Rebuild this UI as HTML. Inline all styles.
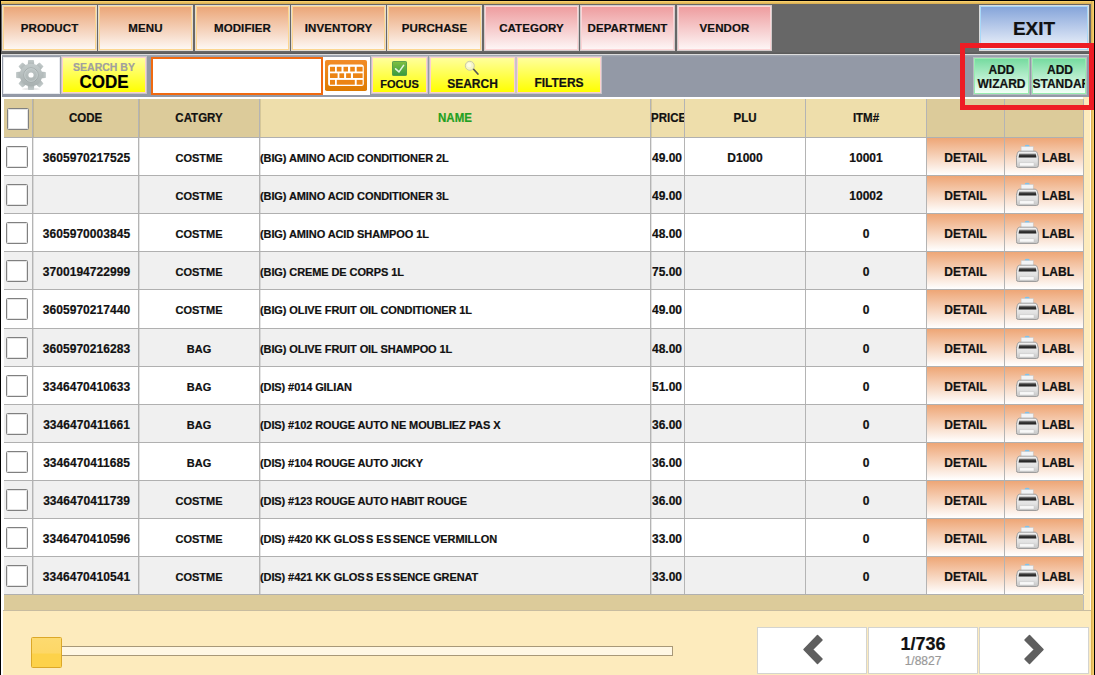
<!DOCTYPE html>
<html><head><meta charset="utf-8"><style>
*{margin:0;padding:0;box-sizing:border-box}
html,body{width:1095px;height:675px;overflow:hidden;background:#fff;font-family:"Liberation Sans",sans-serif;font-weight:bold;color:#111;-webkit-text-stroke:0.2px currentColor}
.a{position:absolute}
.tb{position:absolute;top:5px;height:46px;border:1px solid #e4dcd0;}
.tb>div{position:absolute;left:0;top:0;right:0;bottom:0;border:1px solid #fcd690;background:linear-gradient(#eba678,#fdf7f3);font-size:11.5px;display:flex;align-items:center;justify-content:center;letter-spacing:0.1px}
.tb.pk{border-color:#d4cccc}
.tb.pk>div{border-color:#fcd4d6;background:linear-gradient(#ee9d9f,#fdf5f5)}
.yb{position:absolute;top:56px;height:38px;border:1px solid #c8c4c8}
.yb>div{position:absolute;left:0;top:0;right:0;bottom:0;border:1px solid #fcd0d0;background:linear-gradient(#ffff9c,#ffff00);font-size:12px;text-align:center}
.gb{position:absolute;top:57px;height:38px;border:1px solid #b4bcc0}
.gb>div{position:absolute;left:0;top:0;right:0;bottom:0;border:1px solid #98eeb0;background:linear-gradient(#76dba0,#f2fff6);font-size:12px;text-align:center;line-height:13.5px;padding-top:5px}
.g{margin-left:1.5px}.g1{margin-left:0.5px}
.cell{position:absolute;font-size:12px;white-space:nowrap;overflow:hidden}
.vl{position:absolute;width:1px;background:#b4b4b4}
.hl{position:absolute;height:1px;background:#b0b0b0}
.cb{position:absolute;width:22px;height:22px;background:#fff;border:1px solid #808080;border-radius:1.5px;box-shadow:inset 0 0 0 1px #e4e4e4}
.act{position:absolute;background:linear-gradient(#eea676,#ffffff)}
</style></head><body>

<div class="a" style="left:0;top:0;width:1095px;height:675px;background:#fff"></div>
<div class="a" style="left:1px;top:4px;width:1090px;height:51px;background:#676767"></div>
<div class="a" style="left:1px;top:52px;width:1090px;height:2px;background:linear-gradient(#646464,#585858)"></div>
<div class="a" style="left:1px;top:54px;width:1090px;height:1px;background:#dcdcdc"></div>
<div class="a" style="left:1px;top:1px;width:1093px;height:3px;background:linear-gradient(#ffd772,#d4aa50)"></div>
<div class="a" style="left:1091px;top:1px;width:3px;height:675px;background:linear-gradient(90deg,#d4aa50,#ffd772)"></div>
<div class="a" style="left:0;top:0;width:1095px;height:1px;background:#000"></div>
<div class="a" style="left:0;top:0;width:1px;height:675px;background:#000"></div>
<div class="a" style="left:1094px;top:0;width:1px;height:675px;background:#000"></div>
<div class="tb" style="left:2px;width:95px"><div>PRODUCT</div></div>
<div class="tb" style="left:98px;width:95px"><div>MENU</div></div>
<div class="tb" style="left:195px;width:95px"><div>MODIFIER</div></div>
<div class="tb" style="left:291px;width:95px"><div>INVENTORY</div></div>
<div class="tb" style="left:387px;width:95px"><div>PURCHASE</div></div>
<div class="tb pk" style="left:484px;width:95px"><div>CATEGORY</div></div>
<div class="tb pk" style="left:580px;width:95px"><div>DEPARTMENT</div></div>
<div class="tb pk" style="left:677px;width:95px"><div>VENDOR</div></div>
<div class="a" style="left:979px;top:5px;width:110px;height:46px;border:1px solid #dcdcdc"><div style="position:absolute;left:0;top:0;right:0;bottom:0;border:1px solid #a8d8f8;background:linear-gradient(#86a5da,#eef3fb);font-size:19px;display:flex;align-items:center;justify-content:center;padding-top:1px">EXIT</div></div>
<div class="a" style="left:2px;top:55px;width:1089px;height:42px;background:linear-gradient(#a4aab4 0px,#9399a6 2px)"></div>
<div class="a" style="left:1px;top:97px;width:1082px;height:2px;background:#fff"></div>
<div class="a" style="left:3px;top:57px;width:57px;height:37px;background:#fff;border:1px solid #e8eaee"></div>
<svg class="a" style="left:16px;top:59.6px" width="30" height="30" viewBox="-15 -15 30 30"><defs><linearGradient id="gg" x1="0" y1="0" x2="0" y2="1"><stop offset="0" stop-color="#c2caca"/><stop offset="1" stop-color="#a8b0b0"/></linearGradient></defs><ellipse cx="0" cy="14" rx="9" ry="1.2" fill="#e8e8e8"/><g fill="url(#gg)"><path d="M-3.4 -9 L-2.9 -14.4 Q-2.8 -14.9 -2.3 -14.9 L2.3 -14.9 Q2.8 -14.9 2.9 -14.4 L3.4 -9 Z" transform="rotate(0)"/><path d="M-3.4 -9 L-2.9 -14.4 Q-2.8 -14.9 -2.3 -14.9 L2.3 -14.9 Q2.8 -14.9 2.9 -14.4 L3.4 -9 Z" transform="rotate(45)"/><path d="M-3.4 -9 L-2.9 -14.4 Q-2.8 -14.9 -2.3 -14.9 L2.3 -14.9 Q2.8 -14.9 2.9 -14.4 L3.4 -9 Z" transform="rotate(90)"/><path d="M-3.4 -9 L-2.9 -14.4 Q-2.8 -14.9 -2.3 -14.9 L2.3 -14.9 Q2.8 -14.9 2.9 -14.4 L3.4 -9 Z" transform="rotate(135)"/><path d="M-3.4 -9 L-2.9 -14.4 Q-2.8 -14.9 -2.3 -14.9 L2.3 -14.9 Q2.8 -14.9 2.9 -14.4 L3.4 -9 Z" transform="rotate(180)"/><path d="M-3.4 -9 L-2.9 -14.4 Q-2.8 -14.9 -2.3 -14.9 L2.3 -14.9 Q2.8 -14.9 2.9 -14.4 L3.4 -9 Z" transform="rotate(225)"/><path d="M-3.4 -9 L-2.9 -14.4 Q-2.8 -14.9 -2.3 -14.9 L2.3 -14.9 Q2.8 -14.9 2.9 -14.4 L3.4 -9 Z" transform="rotate(270)"/><path d="M-3.4 -9 L-2.9 -14.4 Q-2.8 -14.9 -2.3 -14.9 L2.3 -14.9 Q2.8 -14.9 2.9 -14.4 L3.4 -9 Z" transform="rotate(315)"/><circle r="11.3"/></g><circle r="7.2" fill="none" stroke="#9ea6a6" stroke-width="0.8"/><circle r="6.4" fill="none" stroke="#ccd4d4" stroke-width="0.7"/><circle r="2.6" fill="#fff"/></svg>
<div class="yb" style="left:61px;width:86px;height:38px"><div style="padding-top:4px"><div style="font-size:10.5px;color:#a0a0a0;line-height:11px">SEARCH BY</div><div style="font-size:17px;color:#000;line-height:16px;margin-top:2px;transform:scaleY(1.08)">CODE</div></div></div>
<div class="a" style="left:151px;top:57px;width:172px;height:38px;background:#fff;border:2px solid #f06a10"></div>
<div class="a" style="left:323px;top:57px;width:47px;height:38px;background:#fff"></div>
<svg class="a" style="left:325px;top:60px" width="42" height="31" viewBox="0 0 42 31"><defs><linearGradient id="kg" x1="0" y1="0" x2="0" y2="1"><stop offset="0" stop-color="#f28c28"/><stop offset="1" stop-color="#de7a00"/></linearGradient></defs>
<rect x="0" y="0" width="42" height="31" rx="1.8" fill="url(#kg)"/>
<rect x="3.1" y="4.6" width="35.7" height="21.5" rx="2.5" fill="#fff"/>
<g fill="#ec8414">
<rect x="5" y="6.8" width="5" height="4.7"/><rect x="11.8" y="6.8" width="4.7" height="4.7"/><rect x="18.5" y="6.8" width="4.5" height="4.7"/><rect x="25.2" y="6.8" width="4.6" height="4.7"/><rect x="31.7" y="6.8" width="5.9" height="4.7"/>
<rect x="5" y="13.3" width="7.6" height="4.7"/><rect x="14.4" y="13.3" width="4.7" height="4.7"/><rect x="21.1" y="13.3" width="4.8" height="4.7"/><rect x="28" y="13.3" width="9.6" height="4.7"/>
<rect x="5" y="19.9" width="5" height="4.8"/><rect x="11.8" y="19.9" width="18" height="4.8"/><rect x="31.7" y="19.9" width="5.9" height="4.8"/>
</g></svg>
<div class="yb" style="left:371px;width:57px"><div><div style="height:21px"></div><div style="line-height:11px;font-size:11px">FOCUS</div></div></div>
<svg class="a" style="left:392px;top:61px" width="15" height="15" viewBox="0 0 15 15"><defs><linearGradient id="cg" x1="0" y1="0" x2="0" y2="1"><stop offset="0" stop-color="#80c040"/><stop offset="1" stop-color="#389a40"/></linearGradient></defs><rect x="0.4" y="0.4" width="14.2" height="14.2" rx="1.2" fill="url(#cg)" stroke="#3a8a4a" stroke-width="0.8"/><path d="M3.6 7.9 L7 10.9 L11.6 4.4" fill="none" stroke="#e4f4e0" stroke-width="1.6" stroke-linecap="round" stroke-linejoin="round"/></svg>
<div class="yb" style="left:429px;width:87px"><div><div style="height:21px"></div><div style="line-height:11px">SEARCH</div></div></div>
<svg class="a" style="left:464px;top:60px" width="16" height="16" viewBox="0 0 16 16"><path d="M9.4 9 L13.9 14" stroke="#555" stroke-width="1.7" stroke-linecap="round"/><circle cx="5.8" cy="5.8" r="4.5" fill="#f6f6c8" stroke="#c4c4a8" stroke-width="0.9"/><circle cx="5.2" cy="5" r="2.2" fill="#fcfce4"/></svg>
<div class="yb" style="left:516px;width:86px"><div style="padding-top:20px;line-height:11px">FILTERS</div></div>
<div class="gb" style="left:973px;width:57px"><div>ADD<br>WIZARD</div></div>
<div class="gb" style="left:1031px;width:56px"><div style="text-align:left;padding-left:0;white-space:nowrap;overflow:hidden"><span style="padding-left:14px">ADD</span><br><span style="margin-left:-0.5px">STANDARD</span></div></div>
<div class="a" style="left:4px;top:99px;width:1079px;height:38px;background:#dccb9a"></div>
<div class="a" style="left:259px;top:99px;width:668px;height:38px;background:#eedeab"></div>
<div class="a" style="left:1083px;top:97px;width:8px;height:578px;background:#fdebbd"></div>
<div class="a" style="left:1090px;top:97px;width:1px;height:578px;background:#fffaf0"></div>
<div class="cell" style="left:33px;top:99px;width:105px;height:38px;line-height:38px;text-align:center;font-size:11.5px;color:#111;transform:scaleY(1.12)">CODE</div>
<div class="cell" style="left:139px;top:99px;width:120px;height:38px;line-height:38px;text-align:center;font-size:11.5px;color:#111;transform:scaleY(1.12)">CATGRY</div>
<div class="cell" style="left:260px;top:99px;width:390px;height:38px;line-height:38px;text-align:center;font-size:11.5px;color:#22a022;transform:scaleY(1.12)">NAME</div>
<div class="cell" style="left:651px;top:99px;width:33px;height:38px;line-height:38px;text-align:center;font-size:11.5px;color:#111;transform:scaleY(1.12)">PRICE</div>
<div class="cell" style="left:685px;top:99px;width:120px;height:38px;line-height:38px;text-align:center;font-size:11.5px;color:#111;transform:scaleY(1.12)">PLU</div>
<div class="cell" style="left:806px;top:99px;width:120px;height:38px;line-height:38px;text-align:center;font-size:11.5px;color:#111;transform:scaleY(1.12)">ITM#</div>
<div class="cb" style="left:7px;top:108px"></div>
<div class="a" style="left:4px;top:137px;width:922px;height:38px;background:#fff"></div>
<div class="act" style="left:927px;top:138px;width:77px;height:37px"></div>
<div class="act" style="left:1005px;top:138px;width:78px;height:37px"></div>
<div class="cb" style="left:6px;top:146px"></div>
<div class="cell" style="left:33px;top:138.5px;width:105px;line-height:38px;text-align:center;letter-spacing:0.05px;padding-left:2px">3605970217525</div>
<div class="cell" style="left:139px;top:138.5px;width:120px;line-height:38px;text-align:center;font-size:11px">COSTME</div>
<div class="cell" style="left:260px;top:138.5px;width:390px;line-height:38px;font-size:11px;letter-spacing:-0.1px">(BIG) AMINO ACID CONDITIONER 2L</div>
<div class="cell" style="left:652px;top:138.5px;width:33px;line-height:38px">49.00</div>
<div class="cell" style="left:685px;top:138.5px;width:120px;line-height:38px;text-align:center">D1000</div>
<div class="cell" style="left:806px;top:138.5px;width:120px;line-height:38px;text-align:center">10001</div>
<div class="cell" style="left:927px;top:138.5px;width:77px;line-height:38px;text-align:center">DETAIL</div>
<div class="a" style="left:1016px;top:144px"><svg width="24" height="24" viewBox="0 0 24 24">
<defs><linearGradient id="bg_" x1="0" y1="0" x2="0" y2="1"><stop offset="0" stop-color="#f2f2f2"/><stop offset="0.6" stop-color="#e2e2e2"/><stop offset="1" stop-color="#c4c4c4"/></linearGradient>
<linearGradient id="sg_" x1="0" y1="0" x2="0" y2="1"><stop offset="0" stop-color="#a0a0a0"/><stop offset="0.45" stop-color="#3a3a3a"/><stop offset="1" stop-color="#1c1c1c"/></linearGradient></defs>
<ellipse cx="11.2" cy="2.2" rx="2.5" ry="1.4" fill="#7ec2ec"/>
<rect x="5.1" y="2.6" width="12.1" height="7" fill="#f2f4f6" stroke="#c4c8cc" stroke-width="0.5"/>
<path d="M3.4 7.2 L19.2 7.2 Q20.8 7.4 21.3 9.2 L22.4 13.2 L22.4 21.5 Q22.4 23.5 20.4 23.5 L2.4 23.5 Q0.4 23.5 0.4 21.5 L0.4 13.2 L1.4 9.2 Q1.9 7.4 3.4 7.2 Z" fill="url(#bg_)" stroke="#969696" stroke-width="0.9"/>
<path d="M3.2 9.6 L19.8 9.6 L20.4 13.4 L2.6 13.4 Z" fill="url(#sg_)"/>
<rect x="3.7" y="18.8" width="14.3" height="3.2" fill="#f8f8f8" stroke="#c8c8c8" stroke-width="0.5"/>
</svg></div>
<div class="cell" style="left:1042px;top:138.5px;width:41px;line-height:38px">LABL</div>
<div class="a" style="left:4px;top:175px;width:922px;height:38px;background:#f0f0f0"></div>
<div class="act" style="left:927px;top:176px;width:77px;height:37px"></div>
<div class="act" style="left:1005px;top:176px;width:78px;height:37px"></div>
<div class="cb" style="left:6px;top:184px"></div>
<div class="cell" style="left:33px;top:176.5px;width:105px;line-height:38px;text-align:center;letter-spacing:0.05px;padding-left:2px"></div>
<div class="cell" style="left:139px;top:176.5px;width:120px;line-height:38px;text-align:center;font-size:11px">COSTME</div>
<div class="cell" style="left:260px;top:176.5px;width:390px;line-height:38px;font-size:11px;letter-spacing:-0.1px">(BIG) AMINO ACID CONDITIONER 3L</div>
<div class="cell" style="left:652px;top:176.5px;width:33px;line-height:38px">49.00</div>
<div class="cell" style="left:685px;top:176.5px;width:120px;line-height:38px;text-align:center"></div>
<div class="cell" style="left:806px;top:176.5px;width:120px;line-height:38px;text-align:center">10002</div>
<div class="cell" style="left:927px;top:176.5px;width:77px;line-height:38px;text-align:center">DETAIL</div>
<div class="a" style="left:1016px;top:182px"><svg width="24" height="24" viewBox="0 0 24 24">
<defs><linearGradient id="bg_" x1="0" y1="0" x2="0" y2="1"><stop offset="0" stop-color="#f2f2f2"/><stop offset="0.6" stop-color="#e2e2e2"/><stop offset="1" stop-color="#c4c4c4"/></linearGradient>
<linearGradient id="sg_" x1="0" y1="0" x2="0" y2="1"><stop offset="0" stop-color="#a0a0a0"/><stop offset="0.45" stop-color="#3a3a3a"/><stop offset="1" stop-color="#1c1c1c"/></linearGradient></defs>
<ellipse cx="11.2" cy="2.2" rx="2.5" ry="1.4" fill="#7ec2ec"/>
<rect x="5.1" y="2.6" width="12.1" height="7" fill="#f2f4f6" stroke="#c4c8cc" stroke-width="0.5"/>
<path d="M3.4 7.2 L19.2 7.2 Q20.8 7.4 21.3 9.2 L22.4 13.2 L22.4 21.5 Q22.4 23.5 20.4 23.5 L2.4 23.5 Q0.4 23.5 0.4 21.5 L0.4 13.2 L1.4 9.2 Q1.9 7.4 3.4 7.2 Z" fill="url(#bg_)" stroke="#969696" stroke-width="0.9"/>
<path d="M3.2 9.6 L19.8 9.6 L20.4 13.4 L2.6 13.4 Z" fill="url(#sg_)"/>
<rect x="3.7" y="18.8" width="14.3" height="3.2" fill="#f8f8f8" stroke="#c8c8c8" stroke-width="0.5"/>
</svg></div>
<div class="cell" style="left:1042px;top:176.5px;width:41px;line-height:38px">LABL</div>
<div class="a" style="left:4px;top:213px;width:922px;height:38px;background:#fff"></div>
<div class="act" style="left:927px;top:214px;width:77px;height:37px"></div>
<div class="act" style="left:1005px;top:214px;width:78px;height:37px"></div>
<div class="cb" style="left:6px;top:222px"></div>
<div class="cell" style="left:33px;top:214.5px;width:105px;line-height:38px;text-align:center;letter-spacing:0.05px;padding-left:2px">3605970003845</div>
<div class="cell" style="left:139px;top:214.5px;width:120px;line-height:38px;text-align:center;font-size:11px">COSTME</div>
<div class="cell" style="left:260px;top:214.5px;width:390px;line-height:38px;font-size:11px;letter-spacing:-0.1px">(BIG) AMINO ACID SHAMPOO 1L</div>
<div class="cell" style="left:652px;top:214.5px;width:33px;line-height:38px">48.00</div>
<div class="cell" style="left:685px;top:214.5px;width:120px;line-height:38px;text-align:center"></div>
<div class="cell" style="left:806px;top:214.5px;width:120px;line-height:38px;text-align:center">0</div>
<div class="cell" style="left:927px;top:214.5px;width:77px;line-height:38px;text-align:center">DETAIL</div>
<div class="a" style="left:1016px;top:220px"><svg width="24" height="24" viewBox="0 0 24 24">
<defs><linearGradient id="bg_" x1="0" y1="0" x2="0" y2="1"><stop offset="0" stop-color="#f2f2f2"/><stop offset="0.6" stop-color="#e2e2e2"/><stop offset="1" stop-color="#c4c4c4"/></linearGradient>
<linearGradient id="sg_" x1="0" y1="0" x2="0" y2="1"><stop offset="0" stop-color="#a0a0a0"/><stop offset="0.45" stop-color="#3a3a3a"/><stop offset="1" stop-color="#1c1c1c"/></linearGradient></defs>
<ellipse cx="11.2" cy="2.2" rx="2.5" ry="1.4" fill="#7ec2ec"/>
<rect x="5.1" y="2.6" width="12.1" height="7" fill="#f2f4f6" stroke="#c4c8cc" stroke-width="0.5"/>
<path d="M3.4 7.2 L19.2 7.2 Q20.8 7.4 21.3 9.2 L22.4 13.2 L22.4 21.5 Q22.4 23.5 20.4 23.5 L2.4 23.5 Q0.4 23.5 0.4 21.5 L0.4 13.2 L1.4 9.2 Q1.9 7.4 3.4 7.2 Z" fill="url(#bg_)" stroke="#969696" stroke-width="0.9"/>
<path d="M3.2 9.6 L19.8 9.6 L20.4 13.4 L2.6 13.4 Z" fill="url(#sg_)"/>
<rect x="3.7" y="18.8" width="14.3" height="3.2" fill="#f8f8f8" stroke="#c8c8c8" stroke-width="0.5"/>
</svg></div>
<div class="cell" style="left:1042px;top:214.5px;width:41px;line-height:38px">LABL</div>
<div class="a" style="left:4px;top:251px;width:922px;height:38px;background:#f0f0f0"></div>
<div class="act" style="left:927px;top:252px;width:77px;height:37px"></div>
<div class="act" style="left:1005px;top:252px;width:78px;height:37px"></div>
<div class="cb" style="left:6px;top:260px"></div>
<div class="cell" style="left:33px;top:252.5px;width:105px;line-height:38px;text-align:center;letter-spacing:0.05px;padding-left:2px">3700194722999</div>
<div class="cell" style="left:139px;top:252.5px;width:120px;line-height:38px;text-align:center;font-size:11px">COSTME</div>
<div class="cell" style="left:260px;top:252.5px;width:390px;line-height:38px;font-size:11px;letter-spacing:-0.1px">(BIG) CREME DE CORPS 1L</div>
<div class="cell" style="left:652px;top:252.5px;width:33px;line-height:38px">75.00</div>
<div class="cell" style="left:685px;top:252.5px;width:120px;line-height:38px;text-align:center"></div>
<div class="cell" style="left:806px;top:252.5px;width:120px;line-height:38px;text-align:center">0</div>
<div class="cell" style="left:927px;top:252.5px;width:77px;line-height:38px;text-align:center">DETAIL</div>
<div class="a" style="left:1016px;top:258px"><svg width="24" height="24" viewBox="0 0 24 24">
<defs><linearGradient id="bg_" x1="0" y1="0" x2="0" y2="1"><stop offset="0" stop-color="#f2f2f2"/><stop offset="0.6" stop-color="#e2e2e2"/><stop offset="1" stop-color="#c4c4c4"/></linearGradient>
<linearGradient id="sg_" x1="0" y1="0" x2="0" y2="1"><stop offset="0" stop-color="#a0a0a0"/><stop offset="0.45" stop-color="#3a3a3a"/><stop offset="1" stop-color="#1c1c1c"/></linearGradient></defs>
<ellipse cx="11.2" cy="2.2" rx="2.5" ry="1.4" fill="#7ec2ec"/>
<rect x="5.1" y="2.6" width="12.1" height="7" fill="#f2f4f6" stroke="#c4c8cc" stroke-width="0.5"/>
<path d="M3.4 7.2 L19.2 7.2 Q20.8 7.4 21.3 9.2 L22.4 13.2 L22.4 21.5 Q22.4 23.5 20.4 23.5 L2.4 23.5 Q0.4 23.5 0.4 21.5 L0.4 13.2 L1.4 9.2 Q1.9 7.4 3.4 7.2 Z" fill="url(#bg_)" stroke="#969696" stroke-width="0.9"/>
<path d="M3.2 9.6 L19.8 9.6 L20.4 13.4 L2.6 13.4 Z" fill="url(#sg_)"/>
<rect x="3.7" y="18.8" width="14.3" height="3.2" fill="#f8f8f8" stroke="#c8c8c8" stroke-width="0.5"/>
</svg></div>
<div class="cell" style="left:1042px;top:252.5px;width:41px;line-height:38px">LABL</div>
<div class="a" style="left:4px;top:289px;width:922px;height:39px;background:#fff"></div>
<div class="act" style="left:927px;top:290px;width:77px;height:38px"></div>
<div class="act" style="left:1005px;top:290px;width:78px;height:38px"></div>
<div class="cb" style="left:6px;top:298px"></div>
<div class="cell" style="left:33px;top:290.5px;width:105px;line-height:38px;text-align:center;letter-spacing:0.05px;padding-left:2px">3605970217440</div>
<div class="cell" style="left:139px;top:290.5px;width:120px;line-height:38px;text-align:center;font-size:11px">COSTME</div>
<div class="cell" style="left:260px;top:290.5px;width:390px;line-height:38px;font-size:11px;letter-spacing:-0.1px">(BIG) OLIVE FRUIT OIL CONDITIONER 1L</div>
<div class="cell" style="left:652px;top:290.5px;width:33px;line-height:38px">49.00</div>
<div class="cell" style="left:685px;top:290.5px;width:120px;line-height:38px;text-align:center"></div>
<div class="cell" style="left:806px;top:290.5px;width:120px;line-height:38px;text-align:center">0</div>
<div class="cell" style="left:927px;top:290.5px;width:77px;line-height:38px;text-align:center">DETAIL</div>
<div class="a" style="left:1016px;top:296px"><svg width="24" height="24" viewBox="0 0 24 24">
<defs><linearGradient id="bg_" x1="0" y1="0" x2="0" y2="1"><stop offset="0" stop-color="#f2f2f2"/><stop offset="0.6" stop-color="#e2e2e2"/><stop offset="1" stop-color="#c4c4c4"/></linearGradient>
<linearGradient id="sg_" x1="0" y1="0" x2="0" y2="1"><stop offset="0" stop-color="#a0a0a0"/><stop offset="0.45" stop-color="#3a3a3a"/><stop offset="1" stop-color="#1c1c1c"/></linearGradient></defs>
<ellipse cx="11.2" cy="2.2" rx="2.5" ry="1.4" fill="#7ec2ec"/>
<rect x="5.1" y="2.6" width="12.1" height="7" fill="#f2f4f6" stroke="#c4c8cc" stroke-width="0.5"/>
<path d="M3.4 7.2 L19.2 7.2 Q20.8 7.4 21.3 9.2 L22.4 13.2 L22.4 21.5 Q22.4 23.5 20.4 23.5 L2.4 23.5 Q0.4 23.5 0.4 21.5 L0.4 13.2 L1.4 9.2 Q1.9 7.4 3.4 7.2 Z" fill="url(#bg_)" stroke="#969696" stroke-width="0.9"/>
<path d="M3.2 9.6 L19.8 9.6 L20.4 13.4 L2.6 13.4 Z" fill="url(#sg_)"/>
<rect x="3.7" y="18.8" width="14.3" height="3.2" fill="#f8f8f8" stroke="#c8c8c8" stroke-width="0.5"/>
</svg></div>
<div class="cell" style="left:1042px;top:290.5px;width:41px;line-height:38px">LABL</div>
<div class="a" style="left:4px;top:328px;width:922px;height:38px;background:#f0f0f0"></div>
<div class="act" style="left:927px;top:329px;width:77px;height:37px"></div>
<div class="act" style="left:1005px;top:329px;width:78px;height:37px"></div>
<div class="cb" style="left:6px;top:337px"></div>
<div class="cell" style="left:33px;top:329.5px;width:105px;line-height:38px;text-align:center;letter-spacing:0.05px;padding-left:2px">3605970216283</div>
<div class="cell" style="left:139px;top:329.5px;width:120px;line-height:38px;text-align:center;font-size:11px">BAG</div>
<div class="cell" style="left:260px;top:329.5px;width:390px;line-height:38px;font-size:11px;letter-spacing:-0.1px">(BIG) OLIVE FRUIT OIL SHAMPOO 1L</div>
<div class="cell" style="left:652px;top:329.5px;width:33px;line-height:38px">48.00</div>
<div class="cell" style="left:685px;top:329.5px;width:120px;line-height:38px;text-align:center"></div>
<div class="cell" style="left:806px;top:329.5px;width:120px;line-height:38px;text-align:center">0</div>
<div class="cell" style="left:927px;top:329.5px;width:77px;line-height:38px;text-align:center">DETAIL</div>
<div class="a" style="left:1016px;top:335px"><svg width="24" height="24" viewBox="0 0 24 24">
<defs><linearGradient id="bg_" x1="0" y1="0" x2="0" y2="1"><stop offset="0" stop-color="#f2f2f2"/><stop offset="0.6" stop-color="#e2e2e2"/><stop offset="1" stop-color="#c4c4c4"/></linearGradient>
<linearGradient id="sg_" x1="0" y1="0" x2="0" y2="1"><stop offset="0" stop-color="#a0a0a0"/><stop offset="0.45" stop-color="#3a3a3a"/><stop offset="1" stop-color="#1c1c1c"/></linearGradient></defs>
<ellipse cx="11.2" cy="2.2" rx="2.5" ry="1.4" fill="#7ec2ec"/>
<rect x="5.1" y="2.6" width="12.1" height="7" fill="#f2f4f6" stroke="#c4c8cc" stroke-width="0.5"/>
<path d="M3.4 7.2 L19.2 7.2 Q20.8 7.4 21.3 9.2 L22.4 13.2 L22.4 21.5 Q22.4 23.5 20.4 23.5 L2.4 23.5 Q0.4 23.5 0.4 21.5 L0.4 13.2 L1.4 9.2 Q1.9 7.4 3.4 7.2 Z" fill="url(#bg_)" stroke="#969696" stroke-width="0.9"/>
<path d="M3.2 9.6 L19.8 9.6 L20.4 13.4 L2.6 13.4 Z" fill="url(#sg_)"/>
<rect x="3.7" y="18.8" width="14.3" height="3.2" fill="#f8f8f8" stroke="#c8c8c8" stroke-width="0.5"/>
</svg></div>
<div class="cell" style="left:1042px;top:329.5px;width:41px;line-height:38px">LABL</div>
<div class="a" style="left:4px;top:366px;width:922px;height:38px;background:#fff"></div>
<div class="act" style="left:927px;top:367px;width:77px;height:37px"></div>
<div class="act" style="left:1005px;top:367px;width:78px;height:37px"></div>
<div class="cb" style="left:6px;top:375px"></div>
<div class="cell" style="left:33px;top:367.5px;width:105px;line-height:38px;text-align:center;letter-spacing:0.05px;padding-left:2px">3346470410633</div>
<div class="cell" style="left:139px;top:367.5px;width:120px;line-height:38px;text-align:center;font-size:11px">BAG</div>
<div class="cell" style="left:260px;top:367.5px;width:390px;line-height:38px;font-size:11px;letter-spacing:-0.1px">(DIS) #014 GILIAN</div>
<div class="cell" style="left:652px;top:367.5px;width:33px;line-height:38px">51.00</div>
<div class="cell" style="left:685px;top:367.5px;width:120px;line-height:38px;text-align:center"></div>
<div class="cell" style="left:806px;top:367.5px;width:120px;line-height:38px;text-align:center">0</div>
<div class="cell" style="left:927px;top:367.5px;width:77px;line-height:38px;text-align:center">DETAIL</div>
<div class="a" style="left:1016px;top:373px"><svg width="24" height="24" viewBox="0 0 24 24">
<defs><linearGradient id="bg_" x1="0" y1="0" x2="0" y2="1"><stop offset="0" stop-color="#f2f2f2"/><stop offset="0.6" stop-color="#e2e2e2"/><stop offset="1" stop-color="#c4c4c4"/></linearGradient>
<linearGradient id="sg_" x1="0" y1="0" x2="0" y2="1"><stop offset="0" stop-color="#a0a0a0"/><stop offset="0.45" stop-color="#3a3a3a"/><stop offset="1" stop-color="#1c1c1c"/></linearGradient></defs>
<ellipse cx="11.2" cy="2.2" rx="2.5" ry="1.4" fill="#7ec2ec"/>
<rect x="5.1" y="2.6" width="12.1" height="7" fill="#f2f4f6" stroke="#c4c8cc" stroke-width="0.5"/>
<path d="M3.4 7.2 L19.2 7.2 Q20.8 7.4 21.3 9.2 L22.4 13.2 L22.4 21.5 Q22.4 23.5 20.4 23.5 L2.4 23.5 Q0.4 23.5 0.4 21.5 L0.4 13.2 L1.4 9.2 Q1.9 7.4 3.4 7.2 Z" fill="url(#bg_)" stroke="#969696" stroke-width="0.9"/>
<path d="M3.2 9.6 L19.8 9.6 L20.4 13.4 L2.6 13.4 Z" fill="url(#sg_)"/>
<rect x="3.7" y="18.8" width="14.3" height="3.2" fill="#f8f8f8" stroke="#c8c8c8" stroke-width="0.5"/>
</svg></div>
<div class="cell" style="left:1042px;top:367.5px;width:41px;line-height:38px">LABL</div>
<div class="a" style="left:4px;top:404px;width:922px;height:38px;background:#f0f0f0"></div>
<div class="act" style="left:927px;top:405px;width:77px;height:37px"></div>
<div class="act" style="left:1005px;top:405px;width:78px;height:37px"></div>
<div class="cb" style="left:6px;top:413px"></div>
<div class="cell" style="left:33px;top:405.5px;width:105px;line-height:38px;text-align:center;letter-spacing:0.05px;padding-left:2px">3346470411661</div>
<div class="cell" style="left:139px;top:405.5px;width:120px;line-height:38px;text-align:center;font-size:11px">BAG</div>
<div class="cell" style="left:260px;top:405.5px;width:390px;line-height:38px;font-size:11px;letter-spacing:-0.1px">(DIS) #102 ROUGE AUTO NE MOUBLIEZ PAS X</div>
<div class="cell" style="left:652px;top:405.5px;width:33px;line-height:38px">36.00</div>
<div class="cell" style="left:685px;top:405.5px;width:120px;line-height:38px;text-align:center"></div>
<div class="cell" style="left:806px;top:405.5px;width:120px;line-height:38px;text-align:center">0</div>
<div class="cell" style="left:927px;top:405.5px;width:77px;line-height:38px;text-align:center">DETAIL</div>
<div class="a" style="left:1016px;top:411px"><svg width="24" height="24" viewBox="0 0 24 24">
<defs><linearGradient id="bg_" x1="0" y1="0" x2="0" y2="1"><stop offset="0" stop-color="#f2f2f2"/><stop offset="0.6" stop-color="#e2e2e2"/><stop offset="1" stop-color="#c4c4c4"/></linearGradient>
<linearGradient id="sg_" x1="0" y1="0" x2="0" y2="1"><stop offset="0" stop-color="#a0a0a0"/><stop offset="0.45" stop-color="#3a3a3a"/><stop offset="1" stop-color="#1c1c1c"/></linearGradient></defs>
<ellipse cx="11.2" cy="2.2" rx="2.5" ry="1.4" fill="#7ec2ec"/>
<rect x="5.1" y="2.6" width="12.1" height="7" fill="#f2f4f6" stroke="#c4c8cc" stroke-width="0.5"/>
<path d="M3.4 7.2 L19.2 7.2 Q20.8 7.4 21.3 9.2 L22.4 13.2 L22.4 21.5 Q22.4 23.5 20.4 23.5 L2.4 23.5 Q0.4 23.5 0.4 21.5 L0.4 13.2 L1.4 9.2 Q1.9 7.4 3.4 7.2 Z" fill="url(#bg_)" stroke="#969696" stroke-width="0.9"/>
<path d="M3.2 9.6 L19.8 9.6 L20.4 13.4 L2.6 13.4 Z" fill="url(#sg_)"/>
<rect x="3.7" y="18.8" width="14.3" height="3.2" fill="#f8f8f8" stroke="#c8c8c8" stroke-width="0.5"/>
</svg></div>
<div class="cell" style="left:1042px;top:405.5px;width:41px;line-height:38px">LABL</div>
<div class="a" style="left:4px;top:442px;width:922px;height:38px;background:#fff"></div>
<div class="act" style="left:927px;top:443px;width:77px;height:37px"></div>
<div class="act" style="left:1005px;top:443px;width:78px;height:37px"></div>
<div class="cb" style="left:6px;top:451px"></div>
<div class="cell" style="left:33px;top:443.5px;width:105px;line-height:38px;text-align:center;letter-spacing:0.05px;padding-left:2px">3346470411685</div>
<div class="cell" style="left:139px;top:443.5px;width:120px;line-height:38px;text-align:center;font-size:11px">BAG</div>
<div class="cell" style="left:260px;top:443.5px;width:390px;line-height:38px;font-size:11px;letter-spacing:-0.1px">(DIS) #104 ROUGE AUTO JICKY</div>
<div class="cell" style="left:652px;top:443.5px;width:33px;line-height:38px">36.00</div>
<div class="cell" style="left:685px;top:443.5px;width:120px;line-height:38px;text-align:center"></div>
<div class="cell" style="left:806px;top:443.5px;width:120px;line-height:38px;text-align:center">0</div>
<div class="cell" style="left:927px;top:443.5px;width:77px;line-height:38px;text-align:center">DETAIL</div>
<div class="a" style="left:1016px;top:449px"><svg width="24" height="24" viewBox="0 0 24 24">
<defs><linearGradient id="bg_" x1="0" y1="0" x2="0" y2="1"><stop offset="0" stop-color="#f2f2f2"/><stop offset="0.6" stop-color="#e2e2e2"/><stop offset="1" stop-color="#c4c4c4"/></linearGradient>
<linearGradient id="sg_" x1="0" y1="0" x2="0" y2="1"><stop offset="0" stop-color="#a0a0a0"/><stop offset="0.45" stop-color="#3a3a3a"/><stop offset="1" stop-color="#1c1c1c"/></linearGradient></defs>
<ellipse cx="11.2" cy="2.2" rx="2.5" ry="1.4" fill="#7ec2ec"/>
<rect x="5.1" y="2.6" width="12.1" height="7" fill="#f2f4f6" stroke="#c4c8cc" stroke-width="0.5"/>
<path d="M3.4 7.2 L19.2 7.2 Q20.8 7.4 21.3 9.2 L22.4 13.2 L22.4 21.5 Q22.4 23.5 20.4 23.5 L2.4 23.5 Q0.4 23.5 0.4 21.5 L0.4 13.2 L1.4 9.2 Q1.9 7.4 3.4 7.2 Z" fill="url(#bg_)" stroke="#969696" stroke-width="0.9"/>
<path d="M3.2 9.6 L19.8 9.6 L20.4 13.4 L2.6 13.4 Z" fill="url(#sg_)"/>
<rect x="3.7" y="18.8" width="14.3" height="3.2" fill="#f8f8f8" stroke="#c8c8c8" stroke-width="0.5"/>
</svg></div>
<div class="cell" style="left:1042px;top:443.5px;width:41px;line-height:38px">LABL</div>
<div class="a" style="left:4px;top:480px;width:922px;height:38px;background:#f0f0f0"></div>
<div class="act" style="left:927px;top:481px;width:77px;height:37px"></div>
<div class="act" style="left:1005px;top:481px;width:78px;height:37px"></div>
<div class="cb" style="left:6px;top:489px"></div>
<div class="cell" style="left:33px;top:481.5px;width:105px;line-height:38px;text-align:center;letter-spacing:0.05px;padding-left:2px">3346470411739</div>
<div class="cell" style="left:139px;top:481.5px;width:120px;line-height:38px;text-align:center;font-size:11px">COSTME</div>
<div class="cell" style="left:260px;top:481.5px;width:390px;line-height:38px;font-size:11px;letter-spacing:-0.1px">(DIS) #123 ROUGE AUTO HABIT ROUGE</div>
<div class="cell" style="left:652px;top:481.5px;width:33px;line-height:38px">36.00</div>
<div class="cell" style="left:685px;top:481.5px;width:120px;line-height:38px;text-align:center"></div>
<div class="cell" style="left:806px;top:481.5px;width:120px;line-height:38px;text-align:center">0</div>
<div class="cell" style="left:927px;top:481.5px;width:77px;line-height:38px;text-align:center">DETAIL</div>
<div class="a" style="left:1016px;top:487px"><svg width="24" height="24" viewBox="0 0 24 24">
<defs><linearGradient id="bg_" x1="0" y1="0" x2="0" y2="1"><stop offset="0" stop-color="#f2f2f2"/><stop offset="0.6" stop-color="#e2e2e2"/><stop offset="1" stop-color="#c4c4c4"/></linearGradient>
<linearGradient id="sg_" x1="0" y1="0" x2="0" y2="1"><stop offset="0" stop-color="#a0a0a0"/><stop offset="0.45" stop-color="#3a3a3a"/><stop offset="1" stop-color="#1c1c1c"/></linearGradient></defs>
<ellipse cx="11.2" cy="2.2" rx="2.5" ry="1.4" fill="#7ec2ec"/>
<rect x="5.1" y="2.6" width="12.1" height="7" fill="#f2f4f6" stroke="#c4c8cc" stroke-width="0.5"/>
<path d="M3.4 7.2 L19.2 7.2 Q20.8 7.4 21.3 9.2 L22.4 13.2 L22.4 21.5 Q22.4 23.5 20.4 23.5 L2.4 23.5 Q0.4 23.5 0.4 21.5 L0.4 13.2 L1.4 9.2 Q1.9 7.4 3.4 7.2 Z" fill="url(#bg_)" stroke="#969696" stroke-width="0.9"/>
<path d="M3.2 9.6 L19.8 9.6 L20.4 13.4 L2.6 13.4 Z" fill="url(#sg_)"/>
<rect x="3.7" y="18.8" width="14.3" height="3.2" fill="#f8f8f8" stroke="#c8c8c8" stroke-width="0.5"/>
</svg></div>
<div class="cell" style="left:1042px;top:481.5px;width:41px;line-height:38px">LABL</div>
<div class="a" style="left:4px;top:518px;width:922px;height:38px;background:#fff"></div>
<div class="act" style="left:927px;top:519px;width:77px;height:37px"></div>
<div class="act" style="left:1005px;top:519px;width:78px;height:37px"></div>
<div class="cb" style="left:6px;top:527px"></div>
<div class="cell" style="left:33px;top:519.5px;width:105px;line-height:38px;text-align:center;letter-spacing:0.05px;padding-left:2px">3346470410596</div>
<div class="cell" style="left:139px;top:519.5px;width:120px;line-height:38px;text-align:center;font-size:11px">COSTME</div>
<div class="cell" style="left:260px;top:519.5px;width:390px;line-height:38px;font-size:11px;letter-spacing:-0.1px">(DIS) #420 KK GLOS<span class=g>S</span> E<span class=g1>S</span><span class=g>S</span>ENCE VERMILLON</div>
<div class="cell" style="left:652px;top:519.5px;width:33px;line-height:38px">33.00</div>
<div class="cell" style="left:685px;top:519.5px;width:120px;line-height:38px;text-align:center"></div>
<div class="cell" style="left:806px;top:519.5px;width:120px;line-height:38px;text-align:center">0</div>
<div class="cell" style="left:927px;top:519.5px;width:77px;line-height:38px;text-align:center">DETAIL</div>
<div class="a" style="left:1016px;top:525px"><svg width="24" height="24" viewBox="0 0 24 24">
<defs><linearGradient id="bg_" x1="0" y1="0" x2="0" y2="1"><stop offset="0" stop-color="#f2f2f2"/><stop offset="0.6" stop-color="#e2e2e2"/><stop offset="1" stop-color="#c4c4c4"/></linearGradient>
<linearGradient id="sg_" x1="0" y1="0" x2="0" y2="1"><stop offset="0" stop-color="#a0a0a0"/><stop offset="0.45" stop-color="#3a3a3a"/><stop offset="1" stop-color="#1c1c1c"/></linearGradient></defs>
<ellipse cx="11.2" cy="2.2" rx="2.5" ry="1.4" fill="#7ec2ec"/>
<rect x="5.1" y="2.6" width="12.1" height="7" fill="#f2f4f6" stroke="#c4c8cc" stroke-width="0.5"/>
<path d="M3.4 7.2 L19.2 7.2 Q20.8 7.4 21.3 9.2 L22.4 13.2 L22.4 21.5 Q22.4 23.5 20.4 23.5 L2.4 23.5 Q0.4 23.5 0.4 21.5 L0.4 13.2 L1.4 9.2 Q1.9 7.4 3.4 7.2 Z" fill="url(#bg_)" stroke="#969696" stroke-width="0.9"/>
<path d="M3.2 9.6 L19.8 9.6 L20.4 13.4 L2.6 13.4 Z" fill="url(#sg_)"/>
<rect x="3.7" y="18.8" width="14.3" height="3.2" fill="#f8f8f8" stroke="#c8c8c8" stroke-width="0.5"/>
</svg></div>
<div class="cell" style="left:1042px;top:519.5px;width:41px;line-height:38px">LABL</div>
<div class="a" style="left:4px;top:556px;width:922px;height:38px;background:#f0f0f0"></div>
<div class="act" style="left:927px;top:557px;width:77px;height:37px"></div>
<div class="act" style="left:1005px;top:557px;width:78px;height:37px"></div>
<div class="cb" style="left:6px;top:565px"></div>
<div class="cell" style="left:33px;top:557.5px;width:105px;line-height:38px;text-align:center;letter-spacing:0.05px;padding-left:2px">3346470410541</div>
<div class="cell" style="left:139px;top:557.5px;width:120px;line-height:38px;text-align:center;font-size:11px">COSTME</div>
<div class="cell" style="left:260px;top:557.5px;width:390px;line-height:38px;font-size:11px;letter-spacing:-0.1px">(DIS) #421 KK GLOS<span class=g>S</span> E<span class=g1>S</span><span class=g>S</span>ENCE GRENAT</div>
<div class="cell" style="left:652px;top:557.5px;width:33px;line-height:38px">33.00</div>
<div class="cell" style="left:685px;top:557.5px;width:120px;line-height:38px;text-align:center"></div>
<div class="cell" style="left:806px;top:557.5px;width:120px;line-height:38px;text-align:center">0</div>
<div class="cell" style="left:927px;top:557.5px;width:77px;line-height:38px;text-align:center">DETAIL</div>
<div class="a" style="left:1016px;top:563px"><svg width="24" height="24" viewBox="0 0 24 24">
<defs><linearGradient id="bg_" x1="0" y1="0" x2="0" y2="1"><stop offset="0" stop-color="#f2f2f2"/><stop offset="0.6" stop-color="#e2e2e2"/><stop offset="1" stop-color="#c4c4c4"/></linearGradient>
<linearGradient id="sg_" x1="0" y1="0" x2="0" y2="1"><stop offset="0" stop-color="#a0a0a0"/><stop offset="0.45" stop-color="#3a3a3a"/><stop offset="1" stop-color="#1c1c1c"/></linearGradient></defs>
<ellipse cx="11.2" cy="2.2" rx="2.5" ry="1.4" fill="#7ec2ec"/>
<rect x="5.1" y="2.6" width="12.1" height="7" fill="#f2f4f6" stroke="#c4c8cc" stroke-width="0.5"/>
<path d="M3.4 7.2 L19.2 7.2 Q20.8 7.4 21.3 9.2 L22.4 13.2 L22.4 21.5 Q22.4 23.5 20.4 23.5 L2.4 23.5 Q0.4 23.5 0.4 21.5 L0.4 13.2 L1.4 9.2 Q1.9 7.4 3.4 7.2 Z" fill="url(#bg_)" stroke="#969696" stroke-width="0.9"/>
<path d="M3.2 9.6 L19.8 9.6 L20.4 13.4 L2.6 13.4 Z" fill="url(#sg_)"/>
<rect x="3.7" y="18.8" width="14.3" height="3.2" fill="#f8f8f8" stroke="#c8c8c8" stroke-width="0.5"/>
</svg></div>
<div class="cell" style="left:1042px;top:557.5px;width:41px;line-height:38px">LABL</div>
<div class="vl" style="left:32px;top:99px;height:495px"></div>
<div class="vl" style="left:33px;top:99px;height:495px;background:rgba(0,0,0,0.1)"></div>
<div class="vl" style="left:138px;top:99px;height:495px"></div>
<div class="vl" style="left:139px;top:99px;height:495px;background:rgba(0,0,0,0.1)"></div>
<div class="vl" style="left:259px;top:99px;height:495px"></div>
<div class="vl" style="left:260px;top:99px;height:495px;background:rgba(0,0,0,0.1)"></div>
<div class="vl" style="left:650px;top:99px;height:495px"></div>
<div class="vl" style="left:651px;top:99px;height:495px;background:rgba(0,0,0,0.1)"></div>
<div class="vl" style="left:684px;top:99px;height:495px"></div>
<div class="vl" style="left:805px;top:99px;height:495px"></div>
<div class="vl" style="left:926px;top:99px;height:495px"></div>
<div class="vl" style="left:1004px;top:99px;height:495px"></div>
<div class="vl" style="left:1083px;top:99px;height:495px"></div>
<div class="hl" style="left:4px;top:137px;width:1079px"></div>
<div class="hl" style="left:4px;top:175px;width:1079px"></div>
<div class="hl" style="left:4px;top:213px;width:1079px"></div>
<div class="hl" style="left:4px;top:251px;width:1079px"></div>
<div class="hl" style="left:4px;top:289px;width:1079px"></div>
<div class="hl" style="left:4px;top:328px;width:1079px"></div>
<div class="hl" style="left:4px;top:366px;width:1079px"></div>
<div class="hl" style="left:4px;top:404px;width:1079px"></div>
<div class="hl" style="left:4px;top:442px;width:1079px"></div>
<div class="hl" style="left:4px;top:480px;width:1079px"></div>
<div class="hl" style="left:4px;top:518px;width:1079px"></div>
<div class="hl" style="left:4px;top:556px;width:1079px"></div>
<div class="hl" style="left:4px;top:594px;width:1079px"></div>
<div class="a" style="left:4px;top:595px;width:1080px;height:15px;background:#dccb9a;border-right:1px solid #bcbcbc"></div>
<div class="a" style="left:3px;top:610px;width:1088px;height:65px;background:#fdebbd;border-top:1px solid #c8bca0"></div>
<div class="a" style="left:61px;top:646px;width:612px;height:10px;background:#fff7e4;border:1px solid #a89878"></div>
<div class="a" style="left:31px;top:637px;width:31px;height:31px;border:1px solid #dca828;border-radius:1.5px;background:linear-gradient(#fdda70 0%,#fdd766 52%,#fdd24a 55%,#fdd24a 100%)"></div>
<div class="a" style="left:757px;top:627px;width:110px;height:47px;background:#fff;border:1px solid #d4d4d0"></div>
<div class="a" style="left:868px;top:627px;width:110px;height:47px;background:#fff;border:1px solid #d4d4d0"></div>
<div class="a" style="left:979px;top:627px;width:110px;height:47px;background:#fff;border:1px solid #d4d4d0"></div>
<svg class="a" style="left:800px;top:634px" width="26" height="32" viewBox="0 0 26 32"><path d="M17.5 1.5 L4 15.5 L17.5 29.5 L22 25 L12.5 15.5 L22 6 Z" fill="#5f5f5f" stroke="#5f5f5f" stroke-width="1.5" stroke-linejoin="round"/></svg>
<svg class="a" style="left:1021px;top:634px" width="26" height="32" viewBox="0 0 26 32"><path d="M8.5 1.5 L22 15.5 L8.5 29.5 L4 25 L13.5 15.5 L4 6 Z" fill="#5f5f5f" stroke="#5f5f5f" stroke-width="1.5" stroke-linejoin="round"/></svg>
<div class="cell" style="left:868px;top:635px;width:110px;text-align:center;font-size:18px;line-height:18px">1/736</div>
<div class="cell" style="left:868px;top:654px;width:110px;text-align:center;font-size:12px;line-height:14px;font-weight:normal;color:#999">1/8827</div>
<div class="a" style="left:960px;top:43px;width:134px;height:67px;border:5px solid #ee1c24"></div>
<div class="a" style="left:1094px;top:0;width:1px;height:675px;background:#000"></div>
</body></html>
